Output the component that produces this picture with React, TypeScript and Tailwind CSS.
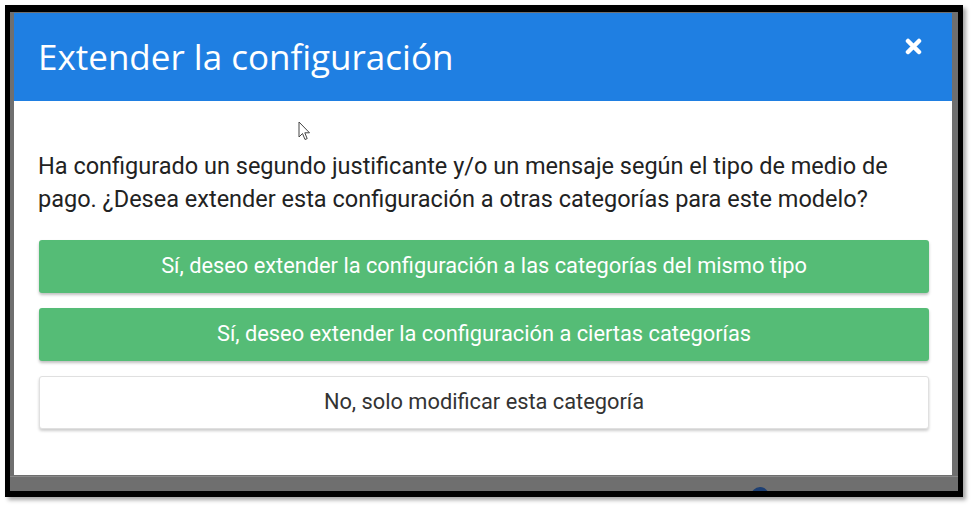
export default function App() {
  const options = [
    { label: "Sí, deseo extender la configuración a las categorías del mismo tipo", primary: true },
    { label: "Sí, deseo extender la configuración a ciertas categorías", primary: true },
    { label: "No, solo modificar esta categoría", primary: false }
  ];

  return (
    <div className="w-[975px] h-[510px] bg-white pl-[5px] pt-[5px]">
      {/* screenshot frame */}
      <div className="w-[958px] h-[492px] border-l-[5px] border-t-[7px] border-r-[5px] border-b-[6px] border-black bg-[#6f6f6f] shadow-[3px_3px_4px_rgba(0,0,0,0.35)] flex flex-col">
        <div className="flex h-[464px] pt-px pl-[4px]">
          {/* modal */}
          <div className="relative w-[938px] h-[462px] bg-white flex flex-col">
            <div className="h-[88px] bg-[#1f7fe2] flex items-center justify-between pl-[24px] pr-[30px]">
              <h1 className="text-white text-[35px] font-['Open_Sans',sans-serif] leading-none pb-[2px]">
                Extender la configuración
              </h1>
              <svg className="w-[17px] h-[17px] -mt-[22px]" viewBox="0 0 17 17">
                <path d="M3 3 L14 14 M14 3 L3 14" stroke="white" strokeWidth={4.5} strokeLinecap="round" />
              </svg>
            </div>

            <div className="flex flex-col px-[24px] pt-[49px] font-['Roboto',sans-serif]">
              <p className="text-[23.5px] leading-[33px] text-[#222] pr-[10px]">
                Ha configurado un segundo justificante y/o un mensaje según el tipo de medio de pago. ¿Desea extender esta configuración a otras categorías para este modelo?
              </p>
              <div className="flex flex-col gap-[15px] mt-[24px] ml-px -mr-px">
                {options.map((opt) => (
                  <button
                    key={opt.label}
                    className={
                      opt.primary
                        ? "h-[53px] rounded-[3px] bg-[#55bc76] text-white text-[21.8px] shadow-[0_2px_3px_rgba(0,0,0,0.25)]"
                        : "h-[53px] rounded-[3px] bg-white text-[#333] text-[21.8px] border border-[#e0e0e0] shadow-[0_2px_3px_rgba(0,0,0,0.2)]"
                    }
                  >
                    {opt.label}
                  </button>
                ))}
              </div>
            </div>

            {/* mouse cursor */}
            <svg className="absolute left-[284px] top-[108px] w-[14px] h-[22px]" viewBox="0 0 14 22">
              <path d="M1 1 L1 16 L4.5 12.5 L7 18.5 L9.2 17.6 L6.8 11.8 L11.5 11.8 Z" fill="white" stroke="#444" strokeWidth={1} strokeLinejoin="round" />
            </svg>
          </div>
        </div>
        {/* dimmed page strip below the modal */}
        <div className="flex-1 relative overflow-hidden border-t border-[#8a8a8a]">
          <div className="absolute left-[741px] top-[10px] w-[18px] h-[18px] rounded-full bg-[#1d3f73]" />
        </div>
      </div>
    </div>
  );
}
